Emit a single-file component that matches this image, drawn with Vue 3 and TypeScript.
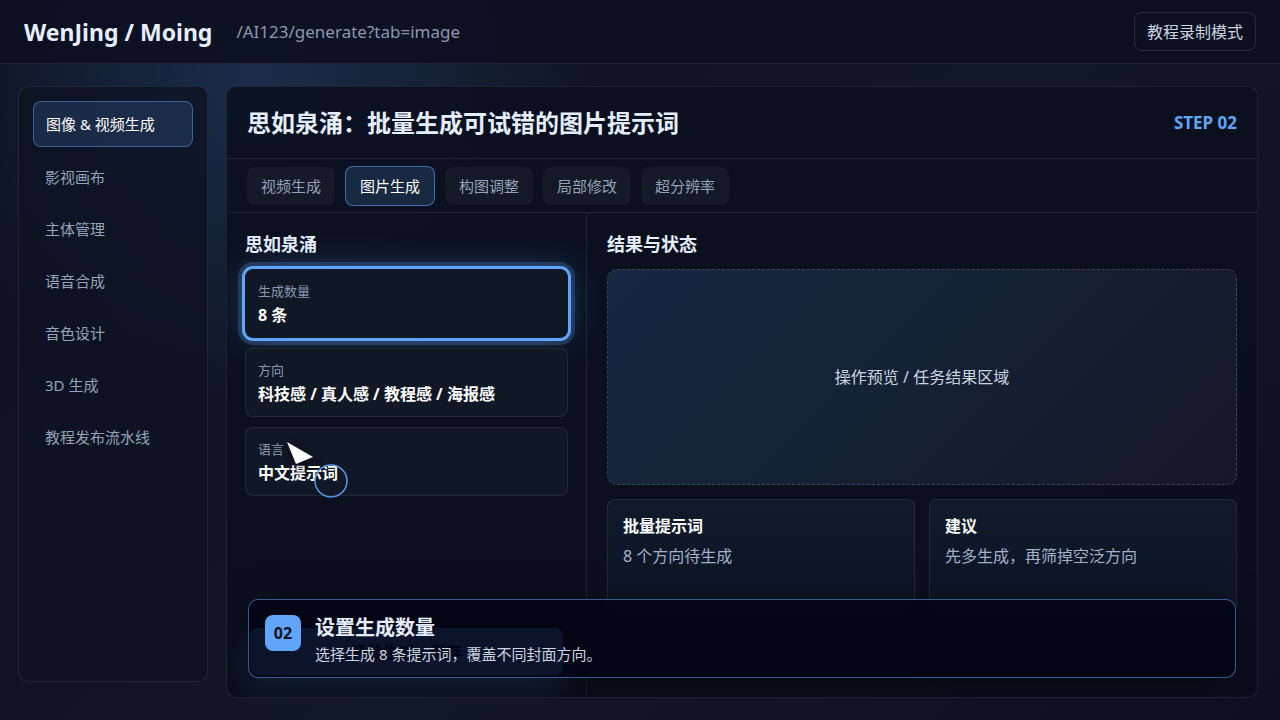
<script setup lang="ts">
import { ref } from 'vue'

interface Field {
  label: string
  value: string
}

const navItems: string[] = ['图像 & 视频生成', '影视画布', '主体管理', '语音合成', '音色设计', '3D 生成', '教程发布流水线']
const tabs: string[] = ['视频生成', '图片生成', '构图调整', '局部修改', '超分辨率']
const fields: Field[] = [
  { label: '生成数量', value: '8 条' },
  { label: '方向', value: '科技感 / 真人感 / 教程感 / 海报感' },
  { label: '语言', value: '中文提示词' },
]
const results: Field[] = [
  { label: '批量提示词', value: '8 个方向待生成' },
  { label: '建议', value: '先多生成，再筛掉空泛方向' },
]

const activeNav = ref(0)
const activeTab = ref(1)
const focusedField = ref(0)
</script>

<template>
  <div class="screen">
    <header class="topbar">
      <strong class="brand">WenJing / Moing</strong>
      <span class="route">/AI123/generate?tab=image</span>
      <button type="button" class="mode">教程录制模式</button>
    </header>

    <div class="layout">
      <nav class="sidebar">
        <a
          v-for="(item, i) in navItems"
          :key="item"
          href="#"
          class="nav-item"
          :class="{ active: i === activeNav }"
          @click.prevent="activeNav = i"
        >{{ item }}</a>
      </nav>

      <main class="panel">
        <div class="panel-head">
          <h1>思如泉涌：批量生成可试错的图片提示词</h1>
          <span class="step">STEP 02</span>
        </div>
        <div class="tabs">
          <button
            v-for="(tab, i) in tabs"
            :key="tab"
            type="button"
            class="tab"
            :class="{ active: i === activeTab }"
            @click="activeTab = i"
          >{{ tab }}</button>
        </div>
        <div class="work">
          <section class="form">
            <h2>思如泉涌</h2>
            <div
              v-for="(field, i) in fields"
              :key="field.label"
              class="field"
              :class="{ focus: i === focusedField }"
            >
              <span>{{ field.label }}</span>
              <strong>{{ field.value }}</strong>
            </div>
            <button type="button" class="submit">开始生成 / 保存</button>
          </section>
          <section class="output">
            <h2>结果与状态</h2>
            <div class="preview">操作预览 / 任务结果区域</div>
            <div class="results">
              <article v-for="card in results" :key="card.label" class="result">
                <strong>{{ card.label }}</strong>
                <span>{{ card.value }}</span>
              </article>
            </div>
          </section>
        </div>

        <aside class="caption">
          <b class="badge">02</b>
          <div>
            <h3>设置生成数量</h3>
            <p>选择生成 8 条提示词，覆盖不同封面方向。</p>
          </div>
        </aside>
      </main>
    </div>

    <svg class="pointer" width="68" height="64" viewBox="0 0 68 64" aria-hidden="true">
      <path class="arrow" d="M4 4 L30 19 L13 26 Z" />
      <circle cx="48" cy="43" r="16" />
    </svg>
  </div>
</template>

<style>
body {
  margin: 0;
  background: #0b1020;
}
</style>

<style scoped>
* {
  box-sizing: border-box;
}
.screen {
  position: relative;
  display: flex;
  flex-direction: column;
  height: 100vh;
  overflow: hidden;
  color: #e5edff;
  font-family: "Noto Sans", "Noto Sans CJK SC", sans-serif;
  font-size: 16px;
  line-height: 22px;
  background:
    radial-gradient(circle at 20% 10%, rgba(96, 165, 250, 0.18), transparent 28%),
    linear-gradient(135deg, #0b1020 0%, #111827 55%, #0b1020 100%);
}
h1,
h2,
h3,
p {
  margin: 0;
}
button {
  font: inherit;
}
.topbar {
  display: flex;
  align-items: center;
  flex: none;
  height: 64px;
  padding: 0 24px;
  border-bottom: 1px solid rgba(255, 255, 255, 0.08);
  background: rgba(10, 15, 31, 0.86);
}
.brand {
  font-size: 23px;
  line-height: 32px;
}
.route {
  margin-left: 24px;
  color: #8b98ae;
  font-size: 17px;
}
.mode {
  margin-left: auto;
  height: 39px;
  padding: 0 12px;
  border: 1px solid rgba(255, 255, 255, 0.12);
  border-radius: 8px;
  background: transparent;
  color: #cbd5e1;
}
.layout {
  display: flex;
  flex: 1;
  gap: 18px;
  min-height: 0;
  padding: 22px 22px 22px 18px;
}
.sidebar {
  display: flex;
  flex-direction: column;
  gap: 6px;
  flex: none;
  width: 190px;
  margin-bottom: 16px;
  padding: 14px;
  border: 1px solid rgba(255, 255, 255, 0.08);
  border-radius: 10px;
  background: rgba(13, 19, 34, 0.84);
}
.nav-item {
  padding: 12px;
  border-radius: 8px;
  color: #94a3b8;
  font-size: 15px;
  text-decoration: none;
}
.nav-item.active {
  margin-bottom: 1px;
  padding: 11px 12px;
  border: 1px solid rgba(96, 165, 250, 0.45);
  background: rgba(96, 165, 250, 0.16);
  color: #fff;
}
.panel {
  position: relative;
  display: flex;
  flex: 1;
  flex-direction: column;
  min-width: 0;
  border: 1px solid rgba(255, 255, 255, 0.08);
  border-radius: 10px;
  overflow: hidden;
  background: rgba(10, 16, 30, 0.9);
}
.panel-head {
  display: flex;
  align-items: center;
  justify-content: space-between;
  flex: none;
  height: 72px;
  padding: 0 20px;
  border-bottom: 1px solid rgba(255, 255, 255, 0.08);
}
h1 {
  font-size: 24px;
  line-height: 32px;
}
.step {
  color: #60a5fa;
  font-size: 17px;
  font-weight: 700;
}
.tabs {
  display: flex;
  align-items: center;
  gap: 10px;
  flex: none;
  height: 54px;
  padding: 0 20px;
  border-bottom: 1px solid rgba(255, 255, 255, 0.08);
}
.tab {
  height: 38px;
  padding: 0 14px;
  border: 0;
  border-radius: 8px;
  background: rgba(255, 255, 255, 0.04);
  color: #94a3b8;
  font-size: 15px;
}
.tab.active {
  height: 40px;
  border: 1px solid rgba(96, 165, 250, 0.55);
  background: rgba(96, 165, 250, 0.16);
  color: #fff;
}
.work {
  display: grid;
  grid-template-columns: 360px 1fr;
  flex: 1;
  min-height: 0;
}
h2 {
  font-size: 18px;
  line-height: 24px;
}
.form {
  display: flex;
  flex-direction: column;
  gap: 10px;
  padding: 19px 18px;
  border-right: 1px solid rgba(255, 255, 255, 0.08);
}
.form h2 {
  margin-bottom: 3px;
}
.field {
  display: flex;
  flex-direction: column;
  gap: 3px;
  height: 69px;
  padding: 10px 12px;
  border: 1px solid rgba(255, 255, 255, 0.08);
  border-radius: 8px;
  background: #101725;
}
.field span {
  color: #8b98ae;
  font-size: 13px;
  line-height: 22px;
}
.field strong {
  color: #fff;
  line-height: 20px;
}
.field.focus {
  border-color: transparent;
  outline: 3px solid #60a5fa;
  box-shadow: 0 0 0 7px rgba(96, 165, 250, 0.22), 0 0 34px rgba(96, 165, 250, 0.32);
}
.submit {
  height: 47px;
  margin: auto 5px 3px;
  border: 0;
  border-radius: 8px;
  background: #60a5fa;
  box-shadow: 0 12px 30px rgba(96, 165, 250, 0.2);
  color: #06101f;
  font-weight: 700;
}
.output {
  display: flex;
  flex-direction: column;
  gap: 14px;
  min-width: 0;
  padding: 19px 20px;
}
.output h2 {
  margin-bottom: -1px;
}
.preview {
  display: grid;
  place-items: center;
  flex: none;
  height: 216px;
  border: 1px dashed rgba(255, 255, 255, 0.16);
  border-radius: 10px;
  background: linear-gradient(135deg, rgba(96, 165, 250, 0.16), rgba(255, 255, 255, 0.04));
  color: #cbd5e1;
}
.results {
  display: grid;
  grid-template-columns: 1fr 1fr;
  gap: 14px;
}
.result {
  display: flex;
  flex-direction: column;
  gap: 8px;
  height: 114px;
  padding: 15px;
  border: 1px solid rgba(255, 255, 255, 0.08);
  border-radius: 8px;
  background: linear-gradient(#111a2b, #0c1524);
}
.result strong {
  color: #fff;
}
.result span {
  color: #a3b1c9;
}
.caption {
  position: absolute;
  right: 21px;
  bottom: 19px;
  left: 21px;
  display: flex;
  gap: 14px;
  padding: 15px 16px 11px;
  border: 1px solid rgba(96, 165, 250, 0.55);
  border-radius: 10px;
  background: rgba(2, 4, 20, 0.9);
  box-shadow: 0 18px 50px rgba(0, 0, 0, 0.4);
}
.badge {
  display: grid;
  place-items: center;
  flex: none;
  width: 36px;
  height: 36px;
  border-radius: 8px;
  background: #60a5fa;
  color: #06101f;
}
h3 {
  font-size: 20px;
  line-height: 26px;
}
.caption p {
  margin-top: 1px;
  color: #cbd5e1;
  font-size: 15px;
  line-height: 24px;
}
.pointer {
  position: absolute;
  top: 438px;
  left: 283px;
  pointer-events: none;
}
.arrow {
  fill: #fff;
  filter: drop-shadow(0 3px 5px rgba(0, 0, 0, 0.6));
}
.pointer circle {
  fill: none;
  stroke: #5b9bee;
  stroke-width: 1.5;
}
</style>
